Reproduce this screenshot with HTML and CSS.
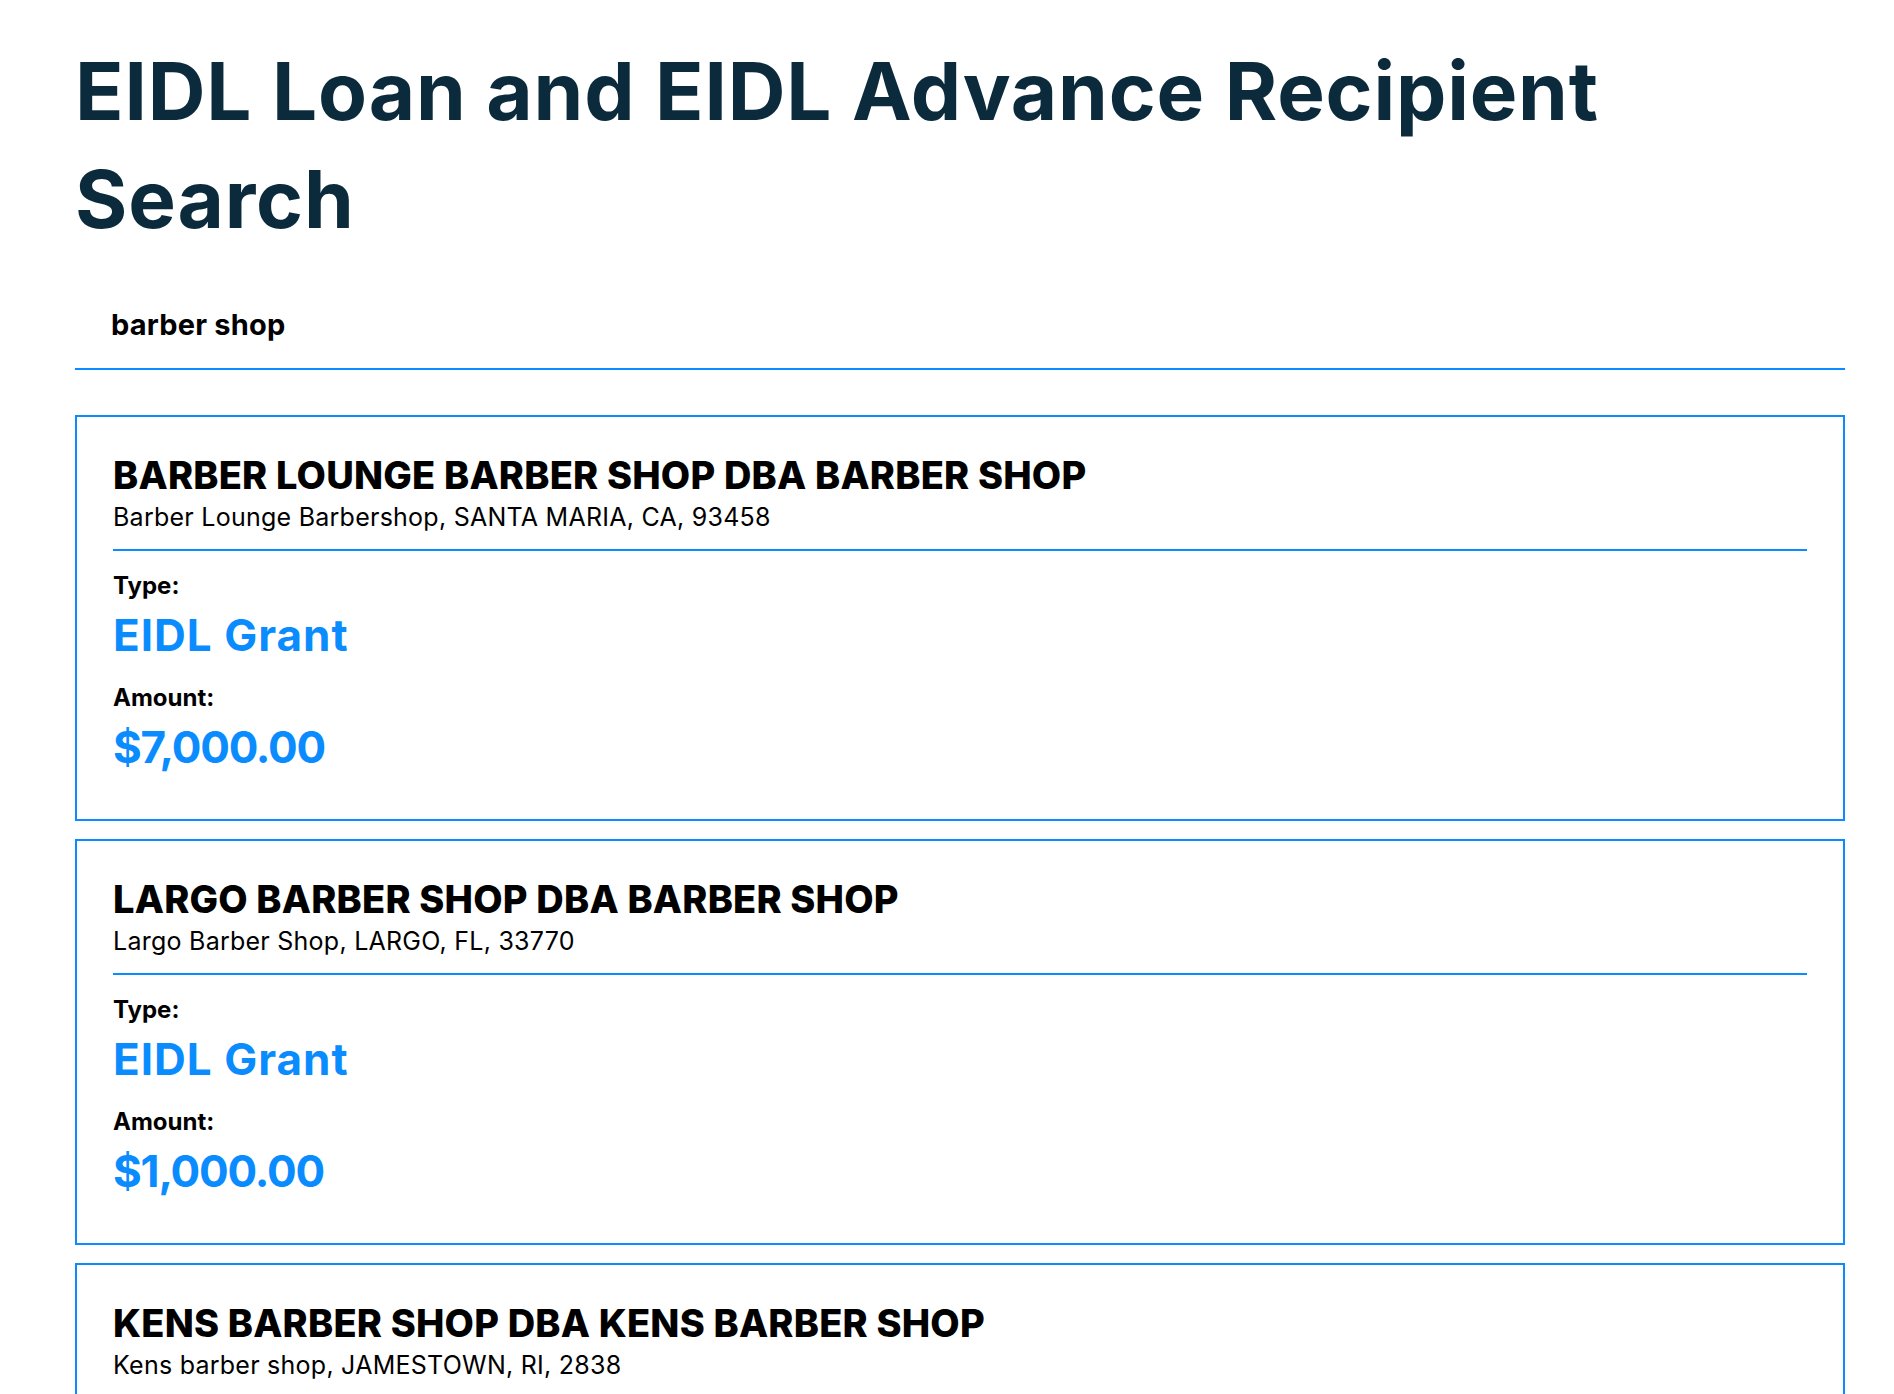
FILE: index.html
```html
<!DOCTYPE html>
<html lang="en">
<head>
<meta charset="utf-8">
<title>EIDL Loan and EIDL Advance Recipient Search</title>
<link rel="stylesheet" href="styles.css">
</head>
<body>
<main class="page">
  <h1 class="title">EIDL Loan and EIDL Advance Recipient Search</h1>
  <div class="search">
    <span class="search-text">barber shop</span>
  </div>
  <ul class="results">
    <li class="card">
      <h2 class="card-name">BARBER LOUNGE BARBER SHOP DBA BARBER SHOP</h2>
      <p class="card-address">Barber Lounge Barbershop, SANTA MARIA, CA, 93458</p>
      <div class="card-body">
        <div class="label">Type:</div>
        <div class="value value-type">EIDL Grant</div>
        <div class="label">Amount:</div>
        <div class="value value-amount">$7,000.00</div>
      </div>
    </li>
    <li class="card">
      <h2 class="card-name">LARGO BARBER SHOP DBA BARBER SHOP</h2>
      <p class="card-address">Largo Barber Shop, LARGO, FL, 33770</p>
      <div class="card-body">
        <div class="label">Type:</div>
        <div class="value value-type">EIDL Grant</div>
        <div class="label">Amount:</div>
        <div class="value value-amount">$1,000.00</div>
      </div>
    </li>
    <li class="card">
      <h2 class="card-name">KENS BARBER SHOP DBA KENS BARBER SHOP</h2>
      <p class="card-address">Kens barber shop, JAMESTOWN, RI, 2838</p>
      <div class="card-body">
        <div class="label">Type:</div>
        <div class="value value-type">EIDL Grant</div>
        <div class="label">Amount:</div>
        <div class="value value-amount">$5,000.00</div>
      </div>
    </li>
  </ul>
</main>
</body>
</html>
```

FILE: styles.css
```css
html, body {
  margin: 0;
  padding: 0;
  background: #ffffff;
}
body {
  font-family: "Inter", "Noto Sans", sans-serif;
  color: #000000;
  height: 1394px;
  overflow: hidden;
}
.page {
  margin: 0 49px 0 75px;
  padding-top: 37px;
}
.title {
  margin: 0;
  max-width: 1650px;
  font-size: 80px;
  line-height: 108px;
  font-weight: 700;
  color: #0b2a3c;
  letter-spacing: 0.8px;
}
.search {
  margin-top: 54px;
  padding: 0 36px 25px;
  border-bottom: 2px solid #0a8cff;
}
.search-text {
  display: block;
  font-size: 29px;
  line-height: 36px;
  font-weight: 700;
  letter-spacing: 0.2px;
}
.results {
  list-style: none;
  margin: 45px 0 0;
  padding: 0;
  display: flex;
  flex-direction: column;
  gap: 18px;
}
.card {
  border: 2px solid #0a8cff;
  padding: 36px 36px 44px;
}
.card-name {
  margin: 0;
  font-size: 38px;
  line-height: 44px;
  font-weight: 800;
  letter-spacing: 0.2px;
}
.card-address {
  margin: 0;
  padding-bottom: 12px;
  border-bottom: 2px solid #0a8cff;
  font-size: 25px;
  line-height: 40px;
  font-weight: 400;
  letter-spacing: 0.25px;
}
.card-body {
  padding-top: 21px;
}
.label {
  font-size: 24px;
  line-height: 28px;
  font-weight: 700;
}
.value {
  margin-top: 7px;
  font-size: 44px;
  line-height: 56px;
  font-weight: 700;
  color: #0a8cff;
}
.value-type {
  letter-spacing: 1px;
}
.value-amount {
  letter-spacing: -1.2px;
}
.value + .label {
  margin-top: 21px;
}
```
